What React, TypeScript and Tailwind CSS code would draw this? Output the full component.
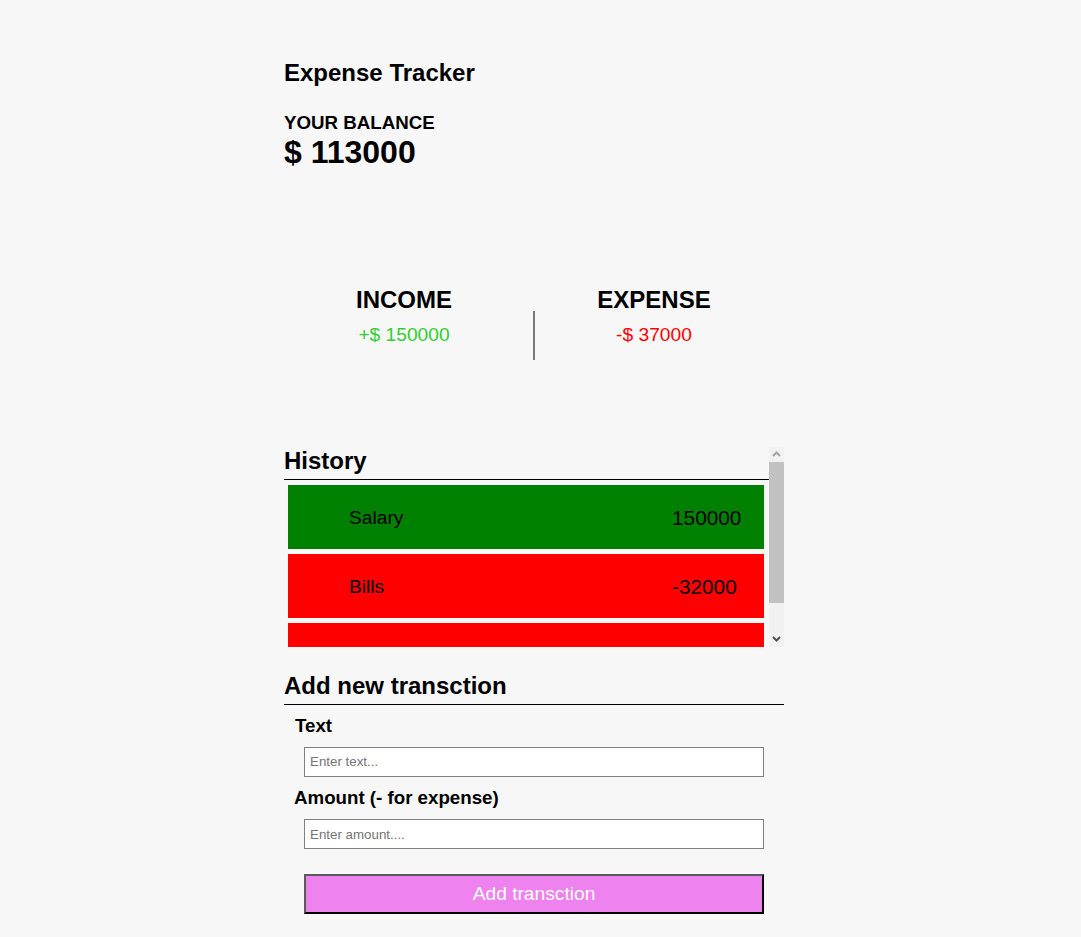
import React from "react";

type Transaction = {
  id: number;
  text: string;
  amount: number;
};

const transactions: Transaction[] = [
  { id: 1, text: "Salary", amount: 150000 },
  { id: 2, text: "Bills", amount: -32000 },
  { id: 3, text: "Food", amount: -5000 },
];

const font = { fontFamily: '"Liberation Sans", Arial, sans-serif' };

const TransactionItem = ({ item }: { item: Transaction }) => {
  const isIncome = item.amount > 0;
  return (
    <li
      className={`ml-[4px] mt-[5px] flex h-[64px] w-[476px] shrink-0 items-center pl-[61px] text-black ${
        isIncome ? "bg-[#008000]" : "bg-[#ff0000]"
      }`}
    >
      <span className="flex-1 pt-[1px] text-[19.2px]">{item.text}</span>
      <span className="w-[92px] text-[20.8px]">{item.amount}</span>
    </li>
  );
};

// classic scrollbar look-alike (native bars are hidden in the screenshot browser)
const ScrollBar = () => (
  <div className="flex h-full w-[15px] shrink-0 flex-col bg-[#f1f1f1]">
    <div className="flex h-[15px] items-center justify-center">
      <svg width="9" height="6" viewBox="0 0 9 6">
        <polyline points="1,5 4.5,1.5 8,5" fill="none" stroke="#a3a3a3" strokeWidth="2" />
      </svg>
    </div>
    <div className="flex-1">
      <div className="mx-[0px] h-[141px] bg-[#c1c1c1]" />
    </div>
    <div className="flex h-[15px] items-center justify-center">
      <svg width="9" height="6" viewBox="0 0 9 6">
        <polyline points="1,1 4.5,4.5 8,1" fill="none" stroke="#505050" strokeWidth="2" />
      </svg>
    </div>
  </div>
);

export default function App() {
  const income = transactions
    .filter((t) => t.amount > 0)
    .reduce((sum, t) => sum + t.amount, 0);
  const expense = transactions
    .filter((t) => t.amount < 0)
    .reduce((sum, t) => sum - t.amount, 0);
  const balance = income - expense;

  return (
    <div className="min-h-screen w-full bg-[#f7f7f7] text-black" style={font}>
      <div className="ml-[284px] flex w-[500px] flex-col pt-[59px] pb-[23px]">
        <h2 className="text-[24px] font-bold leading-[27.6px]">Expense Tracker</h2>

        <h3 className="mt-[25px] text-[18.72px] font-bold leading-[21.5px]">YOUR BALANCE</h3>
        <h1 className="mt-[1px] text-[32px] font-bold leading-[36.8px]">$ {balance}</h1>

        <div className="mt-[115px] flex items-start">
          <div className="flex w-[240px] flex-col items-center">
            <h4 className="text-[24px] font-bold leading-[27.6px]">INCOME</h4>
            <p className="mt-[11px] text-[19.2px] leading-[22px] text-[#32cd32]">+$ {income}</p>
          </div>
          <div className="ml-[9px] mt-[25px] h-[49px] w-[2px] bg-[#7a7a7a]" />
          <div className="ml-[-1px] flex w-[240px] flex-col items-center">
            <h4 className="text-[24px] font-bold leading-[27.6px]">EXPENSE</h4>
            <p className="mt-[11px] text-[19.2px] leading-[22px] text-[#ff0000]">-$ {expense}</p>
          </div>
        </div>

        <div className="mt-[87px] flex h-[200px]">
          <div className="flex w-[485px] flex-col overflow-hidden">
            <h3 className="shrink-0 border-b border-black pb-[5px] text-[24px] font-bold leading-[27.6px]">
              History
            </h3>
            <ul className="flex flex-col pb-[5px]">
              {transactions.map((t) => (
                <TransactionItem key={t.id} item={t} />
              ))}
            </ul>
          </div>
          <ScrollBar />
        </div>

        <h3 className="mt-[25px] border-b border-black pb-[5px] text-[24px] font-bold leading-[27.6px]">
          Add new transction
        </h3>

        <form className="flex flex-col" onSubmit={(e) => e.preventDefault()}>
          <label className="ml-[11px] mt-[10px] text-[18.72px] font-bold leading-[21.5px]">Text</label>
          <input
            type="text"
            placeholder="Enter text..."
            className="ml-[20px] mt-[10px] h-[30px] w-[460px] border border-[#808080] bg-white px-[5px] text-[13.33px] placeholder:text-[#757575]"
          />
          <label className="ml-[10px] mt-[10px] text-[18.72px] font-bold leading-[21.5px]">
            Amount (- for expense)
          </label>
          <input
            type="number"
            placeholder="Enter amount...."
            className="ml-[20px] mt-[11px] h-[30px] w-[460px] border border-[#808080] bg-white px-[5px] text-[13.33px] placeholder:text-[#757575]"
          />
          <button
            type="submit"
            className="ml-[20px] mt-[25px] h-[40px] w-[460px] border-2 border-t-[#5a5a5a] border-l-[#5a5a5a] border-b-black border-r-black bg-[#ee82ee] text-[19.2px] text-white"
          >
            Add transction
          </button>
        </form>
      </div>
    </div>
  );
}
